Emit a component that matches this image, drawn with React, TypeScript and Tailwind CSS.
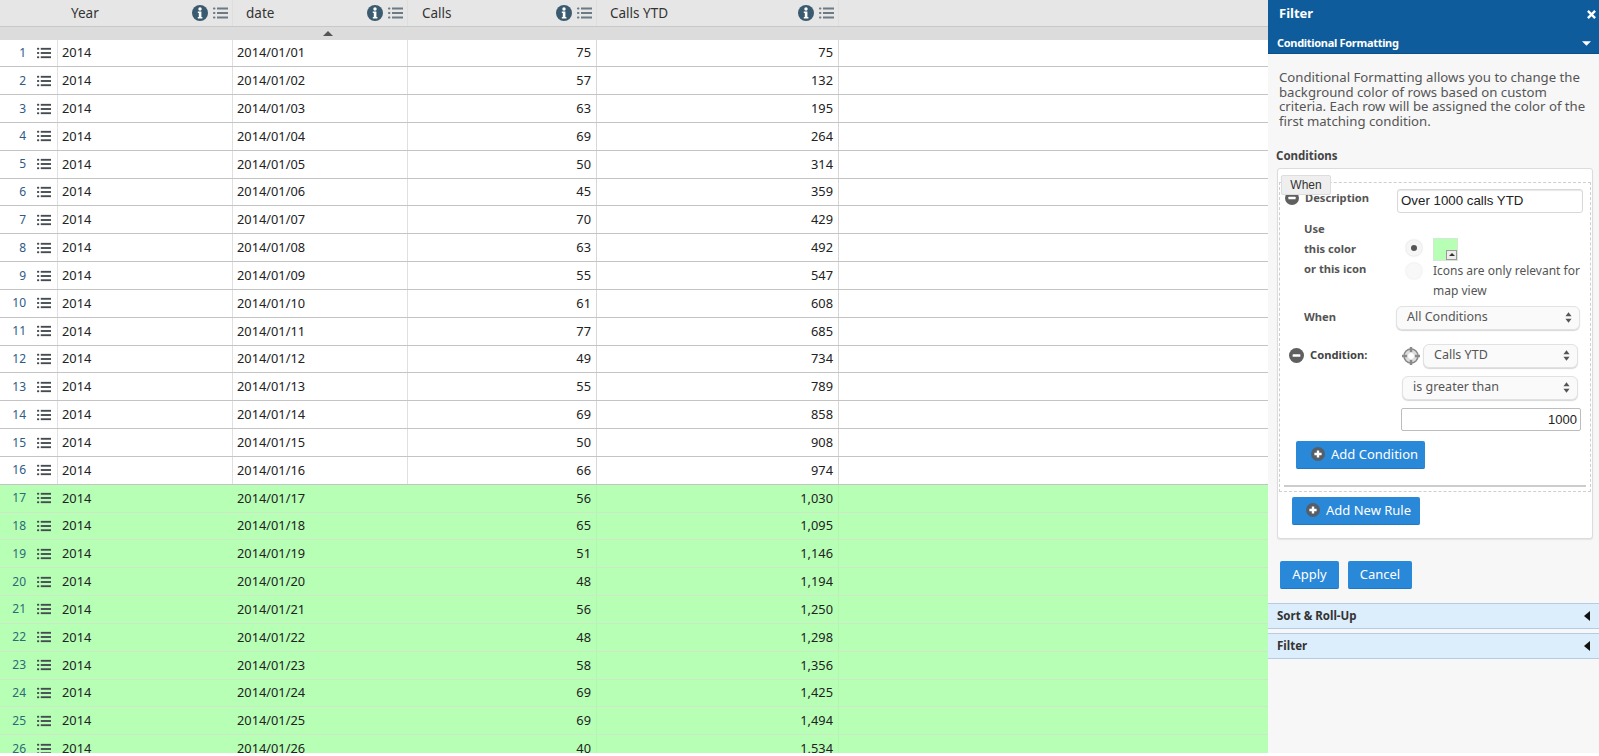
import React from "react";

const calls = [75,57,63,69,50,45,70,63,55,61,77,49,55,69,50,66,56,65,51,48,56,48,58,69,69,40];

function ListIcon({ className }: { className?: string }) {
  return (
    <svg viewBox="0 0 15 12" className={className} fill="currentColor">
      <rect x="0" y="0.5" width="2.4" height="2" rx="0.8" />
      <rect x="0" y="5" width="2.4" height="2" rx="0.8" />
      <rect x="0" y="9.5" width="2.4" height="2" rx="0.8" />
      <rect x="4" y="0.5" width="11" height="2" />
      <rect x="4" y="5" width="11" height="2" />
      <rect x="4" y="9.5" width="11" height="2" />
    </svg>
  );
}

function InfoIcon() {
  return (
    <svg viewBox="0 0 16 16" className="w-[16px] h-[16px] text-[#3a5a70]">
      <circle cx="8" cy="8" r="8" fill="currentColor" />
      <circle cx="8" cy="4" r="1.7" fill="#fff" />
      <path d="M5.8 6.6h3.6v5.3h1v1.5H5.8v-1.5h1V8.1h-1z" fill="#fff" />
    </svg>
  );
}

function MinusIcon({ className }: { className?: string }) {
  return (
    <svg viewBox="0 0 14 14" className={className}>
      <circle cx="7" cy="7" r="7" fill="#5f5f5f" />
      <rect x="3.4" y="5.8" width="7.2" height="2.4" rx="0.5" fill="#fff" />
    </svg>
  );
}

function PlusIcon() {
  return (
    <svg viewBox="0 0 14 14" className="w-[14px] h-[14px] shrink-0">
      <circle cx="7" cy="7" r="7" fill="#565f68" />
      <path d="M5.8 3.4h2.4v2.4h2.4v2.4H8.2v2.4H5.8V8.2H3.4V5.8h2.4z" fill="#fff" />
    </svg>
  );
}

function HeaderCell({ label, width, padding }: { label: string; width: string; padding: string }) {
  return (
    <div className={`${width} ${padding} shrink-0 h-full flex items-center justify-between pr-[4px] border-r border-[#dedede]`}>
      <span className="text-[#333] text-[13.5px]">{label}</span>
      <div className="flex items-center gap-[5px]">
        <InfoIcon />
        <ListIcon className="w-[15px] h-[12px] text-[#6d7a84]" />
      </div>
    </div>
  );
}

function Row({ n, call, total }: { n: number; call: number; total: number }) {
  const green = n >= 17;
  return (
    <div className={`flex h-[27.84px] shrink-0 items-center text-[12.8px] text-[#222] border-b ${green ? "bg-[#b8ffb6] border-[#cde8c6]" : "bg-white border-[#c4c4c4]"}`}>
      <div className={`w-[58px] h-full shrink-0 flex items-center border-r ${green ? "border-[#b8ffb6]" : "border-[#e0e0e0]"}`}>
        <span className={`w-[26px] text-right text-[12px] ${green ? "text-[#2c6a78]" : "text-[#2f5a86]"}`}>{n}</span>
        <ListIcon className="ml-[11px] w-[14px] h-[12px] text-[#444c52]" />
      </div>
      <div className={`w-[175px] h-full shrink-0 flex items-center pl-[4px] border-r ${green ? "border-[#b8ffb6]" : "border-[#e0e0e0]"}`}>2014</div>
      <div className={`w-[175px] h-full shrink-0 flex items-center pl-[4px] border-r ${green ? "border-[#b8ffb6]" : "border-[#e0e0e0]"}`}>2014/01/{String(n).padStart(2, "0")}</div>
      <div className={`w-[189px] h-full shrink-0 flex items-center justify-end pr-[5px] border-r ${green ? "border-[#b2f6b0]" : "border-[#d8d8d8]"}`}>{call}</div>
      <div className={`w-[242px] h-full shrink-0 flex items-center justify-end pr-[5px] border-r ${green ? "border-[#b2f6b0]" : "border-[#d8d8d8]"}`}>{total.toLocaleString("en-US")}</div>
    </div>
  );
}

function Select({ label, className }: { label: string; className: string }) {
  return (
    <div className={`${className} h-[24px] rounded-[6px] border border-[#e2e2e2] bg-[#fafafa] shadow-[0_1px_1px_#d8d8d8] flex items-center justify-between pl-[10px] pr-[7px] text-[12.5px] text-[#555]`}>
      <span>{label}</span>
      <svg viewBox="0 0 8 12" className="w-[7px] h-[11px] text-[#555]" fill="currentColor">
        <path d="M4 0l3.5 4.5h-7zM4 12L.5 7.5h7z" />
      </svg>
    </div>
  );
}

function BlueButton({ children, className }: { children: React.ReactNode; className: string }) {
  return (
    <div className={`${className} h-[28px] rounded-[2px] bg-[#2a88d8] border-b border-[#2478bf] text-white text-[13px] flex items-center`}>
      {children}
    </div>
  );
}

function Accordion({ label, className }: { label: string; className: string }) {
  return (
    <div className={`${className} h-[26px] bg-[#dcedfc] border-y border-[#b4cde2] flex items-center justify-between pl-[9px] pr-[9px] text-[11.5px] font-bold text-[#333]`}>
      <span>{label}</span>
      <svg viewBox="0 0 6 10" className="w-[6px] h-[10px]"><path d="M6 0v10L0 5z" fill="#111" /></svg>
    </div>
  );
}

export default function App() {
  let running = 0;
  const rows = calls.map((c, i) => {
    running += c;
    return <Row key={i} n={i + 1} call={c} total={running} />;
  });
  return (
    <div className="w-[1599px] h-[756px] bg-white overflow-hidden font-['Noto_Sans',sans-serif]">
      <div className="flex h-[753px]">
        <div className="w-[1268px] shrink-0 h-full overflow-hidden flex flex-col">
          <div className="flex h-[27px] shrink-0 bg-[#e6e6e6] border-b border-[#c8c8c8]">
            <HeaderCell label="Year" width="w-[233px]" padding="pl-[71px]" />
            <HeaderCell label="date" width="w-[175px]" padding="pl-[13px]" />
            <HeaderCell label="Calls" width="w-[189px]" padding="pl-[14px]" />
            <HeaderCell label="Calls YTD" width="w-[242px]" padding="pl-[13px]" />
          </div>
          <div className="h-[12.5px] shrink-0 bg-[#dcdcdc] flex justify-start pl-[323px] pt-[4px]">
            <svg viewBox="0 0 10 5" className="w-[10px] h-[5px]"><path d="M5 0l5 5H0z" fill="#555" /></svg>
          </div>
          {rows}
        </div>
        <div className="w-[331px] shrink-0 h-full bg-[#f7f7f7] flex flex-col">
          <div className="h-[54px] shrink-0 bg-[#0f5c9c] border-b border-[#0b4f88] text-white font-bold">
            <div className="h-[28px] flex items-center justify-between pl-[11px] pr-[3px] text-[13px]">
              <span>Filter</span>
              <svg viewBox="0 0 10 10" className="w-[9px] h-[9px]"><path d="M1 1l8 8M9 1l-8 8" stroke="#fff" strokeWidth="2.6" /></svg>
            </div>
            <div className="h-[25px] pt-[5px] flex items-center justify-between pl-[9px] pr-[8px] text-[11px] tracking-[-0.3px]">
              <span>Conditional Formatting</span>
              <svg viewBox="0 0 10 5" className="w-[9px] h-[5px]"><path d="M0 0h10L5 5z" fill="#fff" /></svg>
            </div>
          </div>
          <p className="mt-[16px] ml-[11px] w-[310px] text-[13.2px] leading-[14.7px] text-[#555]">
            Conditional Formatting allows you to change the background color of rows based on custom criteria. Each row will be assigned the color of the first matching condition.
          </p>
          <div className="mt-[19px] ml-[8px] text-[11.5px] leading-[16px] font-bold text-[#444]">Conditions</div>
          <div className="relative mt-[4px] ml-[9px] w-[316px] h-[371px] shrink-0 bg-white border border-[#dcdcdc] rounded-[3px] shadow-[0_1px_1px_#e4e4e4]">
            <div className="absolute left-[3px] top-[6px] w-[50px] h-[20px] bg-[#efefef] border border-[#dddddd] rounded-[2px] flex items-center justify-center text-[12px] text-[#333] font-['Liberation_Sans',sans-serif] z-10">When</div>
            <div className="mt-[13px] mx-[1px] h-[310px] border border-dashed border-[#cfcfcf] text-[11.2px] text-[#444]">
              <div className="flex items-start h-[30px] pt-[6px]">
                <MinusIcon className="ml-[5px] w-[14px] h-[14px] mt-[2px]" />
                <span className="ml-[6px] mt-[1px] font-bold w-[92px] leading-[16px] text-[#555]">Description</span>
                <div className="h-[24px] w-[186px] bg-white border border-[#d8d8d8] rounded-[3px] shadow-[inset_0_1px_1px_#e8e8e8] flex items-center px-[3px] text-[13.3px] text-[#222] font-['Liberation_Sans',sans-serif]">Over 1000 calls YTD</div>
              </div>
              <div className="flex h-[92px] pt-[6px]">
                <div className="ml-[24px] w-[93px] font-bold leading-[20px] text-[#555]">
                  <div>Use</div>
                  <div>this color</div>
                  <div>or this icon</div>
                </div>
                <div className="w-[33px] flex flex-col items-center pt-[21px]">
                  <span className="w-[16px] h-[16px] rounded-full bg-[#f6f6f6] shadow-[0_0_2px_#ccc] flex items-center justify-center"><span className="w-[6px] h-[6px] rounded-full bg-[#555]" /></span>
                  <span className="mt-[7px] w-[16px] h-[16px] rounded-full bg-[#f8f8f8] shadow-[0_0_2px_#ddd]" />
                </div>
                <div className="ml-[3px]">
                  <div className="relative mt-[19px] w-[25px] h-[23px] bg-[#b8ffb6] border border-[#d5e8d5]">
                    <span className="absolute right-0 bottom-0 w-[11px] h-[10px] bg-[#ededed] border border-[#999] flex items-center justify-center">
                      <svg viewBox="0 0 6 3" className="w-[6px] h-[3px]"><path d="M3 0l3 3H0z" fill="#333" /></svg>
                    </span>
                  </div>
                  <div className="leading-[20px] w-[150px] text-[12px] text-[#555]">Icons are only relevant for map view</div>
                </div>
              </div>
              <div className="flex items-center h-[26px]">
                <span className="ml-[24px] w-[92px] font-bold text-[#555]">When</span>
                <Select label="All Conditions" className="w-[184px]" />
              </div>
              <div className="flex items-center h-[24px] mt-[13px]">
                <MinusIcon className="ml-[9px] w-[15px] h-[15px]" />
                <span className="ml-[6px] w-[92px] font-bold text-[#444]">Condition:</span>
                <svg viewBox="0 0 18 18" className="w-[18px] h-[18px] mr-[3px] shrink-0">
                  <circle cx="9" cy="9" r="7" fill="#dcdcdc" stroke="#8a8a8a" strokeWidth="1.5" />
                  <path d="M9 0v5M9 13v5M0 9h5M13 9h5" stroke="#8a8a8a" strokeWidth="2.5" />
                  <circle cx="9" cy="9" r="3" fill="#fff" />
                </svg>
                <Select label="Calls YTD" className="w-[155px]" />
              </div>
              <div className="ml-[122px] mt-[8px]"><Select label="is greater than" className="w-[176px]" /></div>
              <div className="ml-[121px] mt-[8px] w-[180px] h-[23px] bg-white border border-[#bdbdbd] rounded-[2px] flex items-center justify-end pr-[3px] text-[13px] text-[#222] font-['Liberation_Sans',sans-serif]">1000</div>
              <BlueButton className="ml-[16px] mt-[10px] w-[129px] pl-[15px] gap-[6px]"><PlusIcon /><span>Add Condition</span></BlueButton>
              <div className="mt-[16px] mx-[4px] h-[2px] bg-[#cccccc]" />
            </div>
            <BlueButton className="ml-[14px] mt-[5px] w-[128px] pl-[14px] gap-[6px]"><PlusIcon /><span>Add New Rule</span></BlueButton>
          </div>
          <div className="flex mt-[22px] ml-[12px] gap-[9px]">
            <BlueButton className="w-[59px] justify-center">Apply</BlueButton>
            <BlueButton className="w-[64px] justify-center">Cancel</BlueButton>
          </div>
          <Accordion label="Sort & Roll-Up" className="mt-[14px]" />
          <Accordion label="Filter" className="mt-[4px]" />
        </div>
      </div>
    </div>
  );
}
